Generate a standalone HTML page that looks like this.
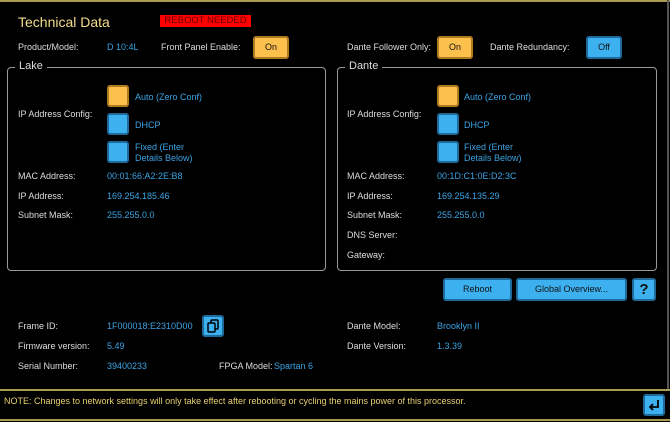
<!DOCTYPE html>
<html><head><style>
body{margin:0;width:670px;height:422px;background:#000;overflow:hidden;position:relative;font-family:"Liberation Sans",sans-serif;font-size:9px;color:#ddd}
div,span{position:absolute;box-sizing:border-box}
.l{color:#ddd}.v{color:#3ca4e4}
.btn{border-radius:3px;text-align:center;color:#111;font-size:9px}
.y{background:#fcc04c;border:2px solid #b07a20}
.b{background:#3db0f0;border:2px solid #1f6a9a}
.box{border:1px solid #999;border-radius:4px}
.cb{width:22px;height:22px;border-radius:3px}
</style></head><body>
<div style="left:0;top:0;width:670px;height:2px;background:#a89a50"></div>
<div style="left:667px;top:0;width:2px;height:390px;background:#555"></div>
<div style="left:18px;top:14px;font-size:14px;color:#f3dc8c">Technical Data</div>
<div style="left:160px;top:15px;width:91px;height:12px;background:#f00;color:#600;font-size:9.5px;line-height:12px;text-align:center">REBOOT NEEDED</div>
<div class="l" style="left:18px;top:42px">Product/Model:</div>
<div class="v" style="left:107px;top:42px">D 10:4L</div>
<div class="l" style="left:161px;top:42px">Front Panel Enable:</div>
<div class="btn y" style="left:253px;top:36px;width:36px;height:23px;line-height:19px">On</div>
<div class="l" style="left:347px;top:42px">Dante Follower Only:</div>
<div class="btn y" style="left:437px;top:36px;width:36px;height:23px;line-height:19px">On</div>
<div class="l" style="left:490px;top:42px">Dante Redundancy:</div>
<div class="btn b" style="left:586px;top:36px;width:36px;height:23px;line-height:19px">Off</div>

<div class="box" style="left:7px;top:67px;width:319px;height:204px"></div>
<div style="left:15px;top:60px;background:#000;padding:0 4px;font-size:11px;color:#ddd">Lake</div>
<div class="l" style="left:18px;top:109px">IP Address Config:</div>
<div class="cb y" style="left:107px;top:85px"></div><div class="v" style="left:135px;top:92px">Auto (Zero Conf)</div>
<div class="cb b" style="left:107px;top:113px"></div><div class="v" style="left:135px;top:120px">DHCP</div>
<div class="cb b" style="left:107px;top:141px"></div><div class="v" style="left:135px;top:142px;line-height:11px">Fixed (Enter<br>Details Below)</div>
<div class="l" style="left:18px;top:171px">MAC Address:</div><div class="v" style="left:107px;top:171px">00:01:66:A2:2E:B8</div>
<div class="l" style="left:18px;top:191px">IP Address:</div><div class="v" style="left:107px;top:191px">169.254.185.46</div>
<div class="l" style="left:18px;top:210px">Subnet Mask:</div><div class="v" style="left:107px;top:210px">255.255.0.0</div>

<div class="box" style="left:337px;top:67px;width:320px;height:204px"></div>
<div style="left:345px;top:60px;background:#000;padding:0 4px;font-size:11px;color:#ddd">Dante</div>
<div class="l" style="left:347px;top:109px">IP Address Config:</div>
<div class="cb y" style="left:437px;top:85px"></div><div class="v" style="left:464px;top:92px">Auto (Zero Conf)</div>
<div class="cb b" style="left:437px;top:113px"></div><div class="v" style="left:464px;top:120px">DHCP</div>
<div class="cb b" style="left:437px;top:141px"></div><div class="v" style="left:464px;top:142px;line-height:11px">Fixed (Enter<br>Details Below)</div>
<div class="l" style="left:347px;top:171px">MAC Address:</div><div class="v" style="left:437px;top:171px">00:1D:C1:0E:D2:3C</div>
<div class="l" style="left:347px;top:191px">IP Address:</div><div class="v" style="left:437px;top:191px">169.254.135.29</div>
<div class="l" style="left:347px;top:210px">Subnet Mask:</div><div class="v" style="left:437px;top:210px">255.255.0.0</div>
<div class="l" style="left:347px;top:230px">DNS Server:</div>
<div class="l" style="left:347px;top:250px">Gateway:</div>

<div class="btn b" style="left:443px;top:278px;width:69px;height:23px;line-height:19px">Reboot</div>
<div class="btn b" style="left:516px;top:278px;width:111px;height:23px;line-height:19px">Global Overview...</div>
<div class="btn b" style="left:632px;top:278px;width:24px;height:23px;line-height:19px;font-size:15px;font-weight:bold">?</div>

<div class="l" style="left:18px;top:321px">Frame ID:</div><div class="v" style="left:107px;top:321px">1F000018:E2310D00</div>
<div class="btn b" style="left:202px;top:315px;width:22px;height:22px">
<svg width="18" height="18" style="position:absolute;left:0;top:0" viewBox="0 0 18 18"><rect x="7" y="3" width="7" height="9" rx="1" fill="none" stroke="#000" stroke-width="1.5"/><rect x="4" y="6" width="7" height="9" rx="1" fill="#3db0f0" stroke="#000" stroke-width="1.5"/></svg></div>
<div class="l" style="left:18px;top:341px">Firmware version:</div><div class="v" style="left:107px;top:341px">5.49</div>
<div class="l" style="left:18px;top:361px">Serial Number:</div><div class="v" style="left:107px;top:361px">39400233</div>
<div class="l" style="left:219px;top:361px">FPGA Model:</div><div class="v" style="left:274px;top:361px">Spartan 6</div>
<div class="l" style="left:347px;top:321px">Dante Model:</div><div class="v" style="left:437px;top:321px">Brooklyn II</div>
<div class="l" style="left:347px;top:341px">Dante Version:</div><div class="v" style="left:437px;top:341px">1.3.39</div>

<div style="left:0;top:389px;width:670px;height:2px;background:#a89a50"></div>
<div style="left:0;top:419px;width:670px;height:2px;background:#a89a50"></div>
<div style="left:4px;top:396px;color:#e8d070">NOTE: Changes to network settings will only take effect after rebooting or cycling the mains power of this processor.</div>
<div class="btn b" style="left:643px;top:394px;width:22px;height:22px">
<svg width="18" height="18" style="position:absolute;left:0;top:0" viewBox="0 0 18 18"><path d="M13 4V11H5M8 8L5 11L8 14" fill="none" stroke="#000" stroke-width="1.8"/></svg></div>
</body></html>
